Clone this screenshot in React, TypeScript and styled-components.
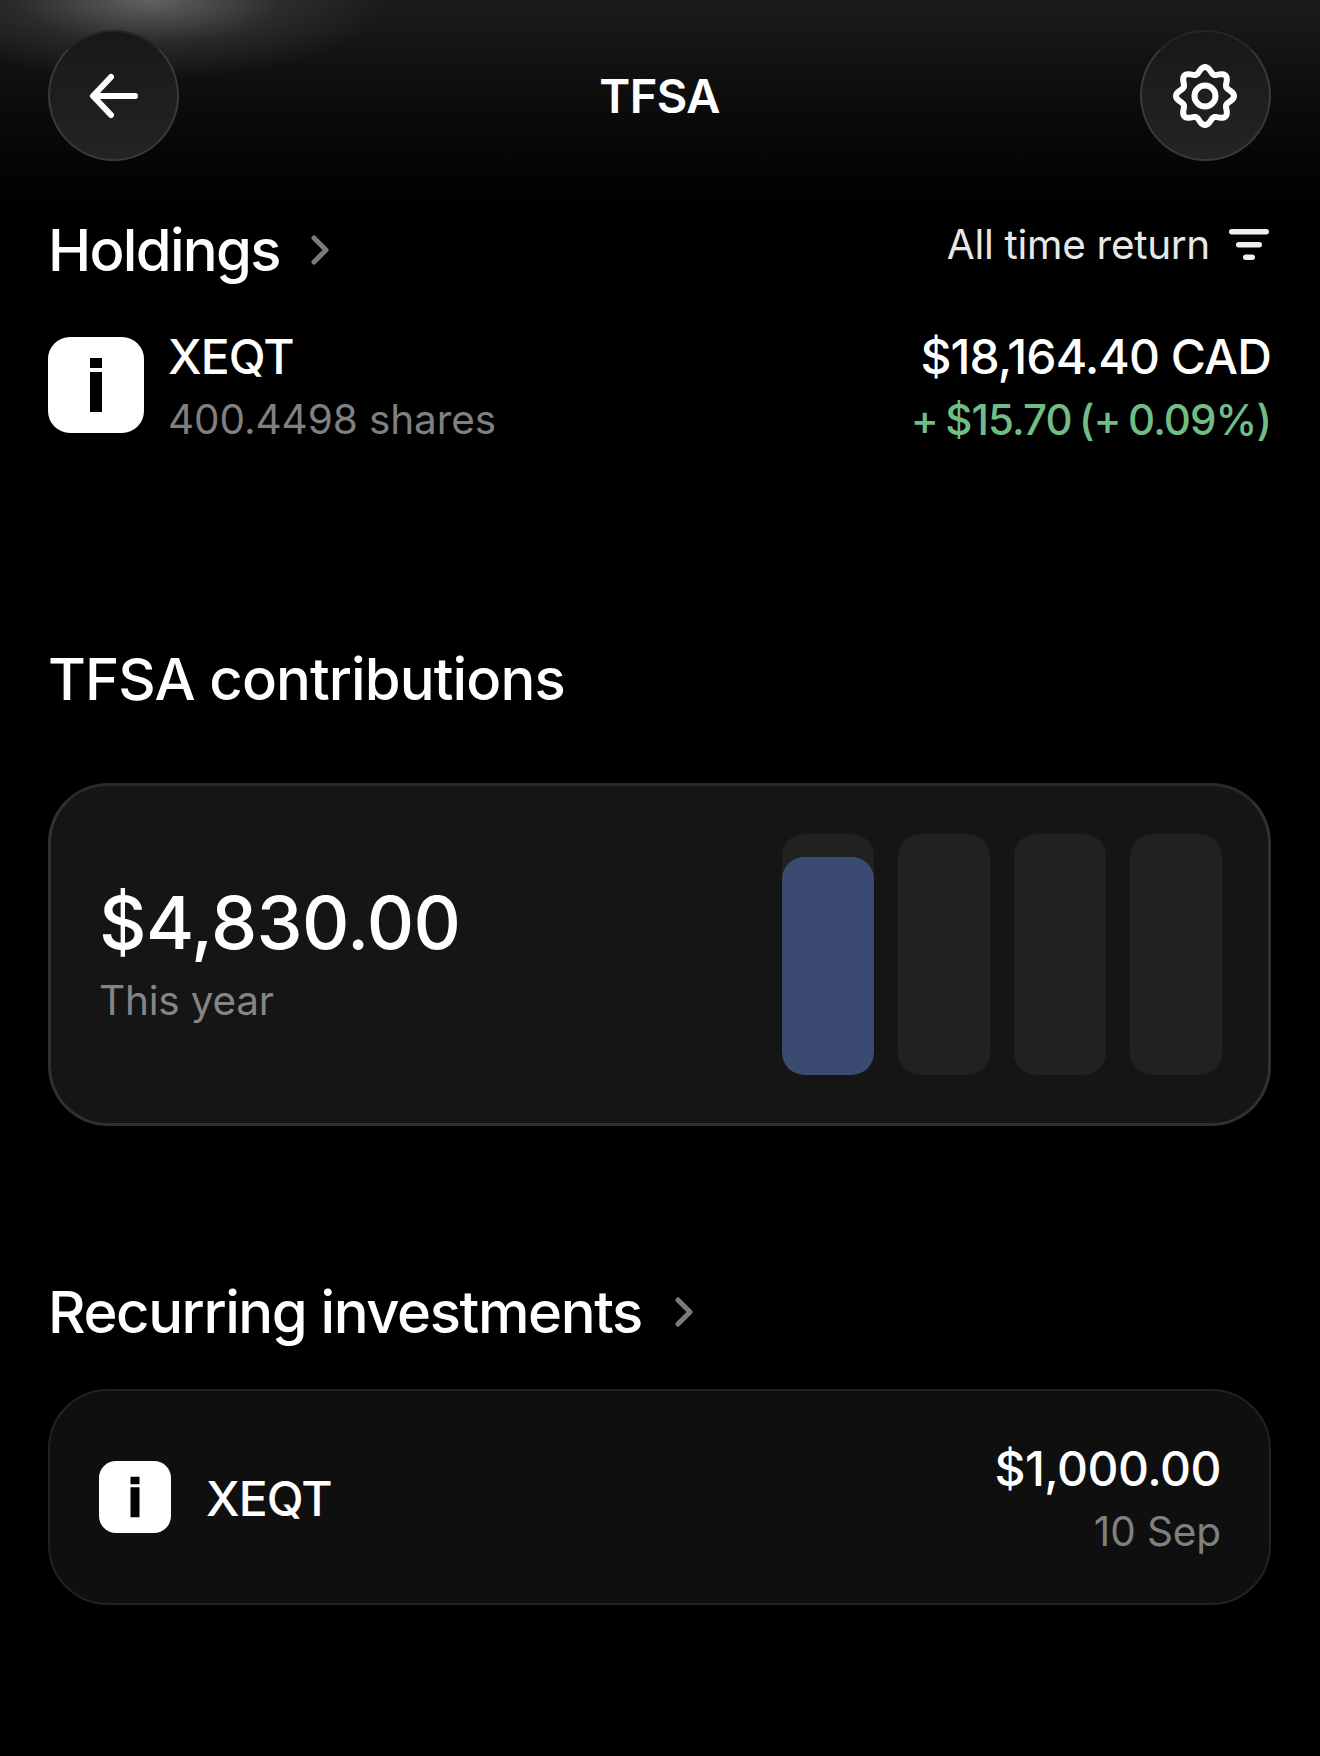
import React from 'react';
import styled, { createGlobalStyle } from 'styled-components';

const GlobalStyle = createGlobalStyle`
  html, body {
    margin: 0;
    padding: 0;
    background: #000;
  }
  body {
    font-family: Inter, "Liberation Sans", sans-serif;
    color: #fff;
    -webkit-font-smoothing: antialiased;
  }
  * {
    box-sizing: border-box;
  }
`;

const Screen = styled.div`
  width: 1320px;
  height: 1756px;
  overflow: hidden;
  padding: 30px 49px 0 48px;
  background:
    radial-gradient(ellipse 240px 80px at 150px 0, rgba(115, 115, 115, 0.8) 0%, rgba(70, 70, 70, 0.4) 55%, rgba(0, 0, 0, 0) 100%),
    linear-gradient(180deg, #1b1b1b 0, #0b0b0b 110px, #000 210px);
`;

const Header = styled.header`
  display: flex;
  align-items: center;
  justify-content: space-between;
  height: 131px;
`;

const RoundButton = styled.button`
  width: 131px;
  height: 131px;
  padding: 0;
  display: flex;
  align-items: center;
  justify-content: center;
  border-radius: 50%;
  border: 2px solid #3a3a3a;
  border-top-color: #262626;
  background: linear-gradient(180deg, #181818 0%, #242424 100%);
`;

const HeaderTitle = styled.h1`
  margin: 0;
  font-size: 47px;
  line-height: 56px;
  font-weight: 600;
  letter-spacing: -0.6px;
`;

const SectionRow = styled.div<{ $top: number }>`
  display: flex;
  align-items: center;
  justify-content: space-between;
  margin-top: ${({ $top }) => $top}px;
`;

const TitleGroup = styled.div<{ $gap: number }>`
  display: flex;
  align-items: center;
  gap: ${({ $gap }) => $gap}px;
`;

const SectionTitle = styled.h2<{ $spacing: number }>`
  margin: 0;
  font-size: 58px;
  line-height: 70px;
  font-weight: 500;
  letter-spacing: ${({ $spacing }) => $spacing}px;
`;

const SortControl = styled.div`
  display: flex;
  align-items: center;
  gap: 19px;
  margin-top: -10px;
  padding-right: 2px;
  font-size: 40.5px;
  line-height: 50px;
  font-weight: 400;
  color: #e8e8e8;
  letter-spacing: -0.3px;
`;

const HoldingRow = styled.div`
  display: flex;
  align-items: center;
  justify-content: space-between;
  margin-top: 41px;
`;

const HoldingInfo = styled.div<{ $gap: number }>`
  display: flex;
  align-items: center;
  gap: ${({ $gap }) => $gap}px;
`;

const Stack = styled.div<{ $end?: boolean }>`
  display: flex;
  flex-direction: column;
  gap: 12px;
  margin-top: 4px;
  align-items: ${({ $end }) => ($end ? 'flex-end' : 'flex-start')};
`;

const PrimaryText = styled.div`
  font-size: 48px;
  line-height: 54px;
  font-weight: 450;
  letter-spacing: -0.9px;
  color: #fff;
`;

const RecurringName = styled(PrimaryText)`
  margin-top: 4px;
`;

const RecurringAmount = styled(PrimaryText)`
  letter-spacing: -0.5px;
`;

const MutedText = styled.div`
  font-size: 40.5px;
  line-height: 48px;
  font-weight: 400;
  color: #808080;
  letter-spacing: -0.1px;
`;

const GainText = styled.div`
  font-size: 42px;
  line-height: 48px;
  font-weight: 500;
  color: #70bd85;
  letter-spacing: -0.9px;
  word-spacing: -3px;
`;

const ContributionCard = styled.section`
  display: flex;
  align-items: center;
  justify-content: space-between;
  height: 343px;
  margin-top: 69px;
  padding: 0 46px 0 48px;
  border-radius: 60px;
  border: 3px solid #303030;
  border-top-color: #2a2a2a;
  background: #151515;
`;

const ContributionText = styled.div`
  display: flex;
  flex-direction: column;
  gap: 10px;
  margin-top: -6px;
`;

const BigAmount = styled.div`
  font-size: 73.5px;
  line-height: 88px;
  font-weight: 500;
  letter-spacing: -0.6px;
`;

const CardLabel = styled.div`
  font-size: 40.5px;
  line-height: 48px;
  color: #858585;
  letter-spacing: -0.2px;
`;

const Quarters = styled.div`
  display: flex;
  gap: 24px;
`;

const Quarter = styled.div`
  position: relative;
  width: 92px;
  height: 241px;
  border-radius: 22px;
  overflow: hidden;
  background: #212121;
`;

const QuarterFill = styled.div`
  position: absolute;
  left: 0;
  right: 0;
  bottom: 0;
  border-radius: 22px;
  background: #3a4a70;
`;

const RecurringCard = styled.section`
  display: flex;
  align-items: center;
  justify-content: space-between;
  height: 216px;
  margin-top: 42px;
  padding: 0 48px 0 49px;
  border-radius: 60px;
  border: 2px solid #222;
  background: #0f0f0f;
`;

const LogoBox = styled.div<{ $size: number; $radius: number }>`
  flex: none;
  display: flex;
  align-items: center;
  justify-content: center;
  width: ${({ $size }) => $size}px;
  height: ${({ $size }) => $size}px;
  border-radius: ${({ $radius }) => $radius}px;
  background: #fff;
`;

const Logo = ({ size, radius }: { size: number; radius: number }) => (
  <LogoBox $size={size} $radius={radius}>
    <svg width={size} height={size} viewBox="0 0 96 96" aria-hidden="true">
      <rect x="42" y="21" width="12" height="10" fill="#000" />
      <rect x="42" y="35" width="12" height="40" fill="#000" />
    </svg>
  </LogoBox>
);

const BackIcon = () => (
  <svg width="50" height="46" viewBox="0 0 50 46" fill="none" stroke="#fff" strokeWidth="6" strokeLinecap="round" strokeLinejoin="round" aria-hidden="true">
    <path d="M46 23H5" />
    <path d="M22 4 4 23l18 19" />
  </svg>
);

// wavy eight lobed outline of the settings badge
const gearPath = () => {
  const points: string[] = [];
  for (let i = 0; i < 160; i += 1) {
    const a = (i / 160) * Math.PI * 2;
    const r = 26 + 3 * Math.cos(8 * a);
    points.push(`${(32 + r * Math.cos(a)).toFixed(2)} ${(32 + r * Math.sin(a)).toFixed(2)}`);
  }
  return `M${points.join('L')}Z`;
};

const GearIcon = () => (
  <svg width="64" height="64" viewBox="0 0 64 64" fill="none" stroke="#fff" strokeWidth="6" strokeLinejoin="round" aria-hidden="true">
    <path d={gearPath()} />
    <circle cx="32" cy="32" r="10.5" />
  </svg>
);

const ChevronIcon = () => (
  <svg width="20" height="30" viewBox="0 0 20 30" fill="none" stroke="#7a7a7a" strokeWidth="5" strokeLinecap="round" strokeLinejoin="round" aria-hidden="true">
    <path d="M4 3 16 15 4 27" />
  </svg>
);

const FilterIcon = () => (
  <svg width="40" height="32" viewBox="0 0 40 32" fill="#f0f0f0" aria-hidden="true">
    <rect x="0" y="0" width="40" height="5.5" rx="2.7" />
    <rect x="7" y="13" width="26" height="5.5" rx="2.7" />
    <rect x="14" y="25.5" width="12" height="5.5" rx="2.7" />
  </svg>
);

const quarterFills = [218, 0, 0, 0];

const App = () => (
  <>
    <GlobalStyle />
    <Screen>
      <Header>
        <RoundButton aria-label="Back">
          <BackIcon />
        </RoundButton>
        <HeaderTitle>TFSA</HeaderTitle>
        <RoundButton aria-label="Settings">
          <GearIcon />
        </RoundButton>
      </Header>

      <SectionRow $top={54}>
        <TitleGroup $gap={30}>
          <SectionTitle $spacing={-1.7}>Holdings</SectionTitle>
          <ChevronIcon />
        </TitleGroup>
        <SortControl>
          All time return
          <FilterIcon />
        </SortControl>
      </SectionRow>

      <HoldingRow>
        <HoldingInfo $gap={24}>
          <Logo size={96} radius={22} />
          <Stack>
            <PrimaryText>XEQT</PrimaryText>
            <MutedText>400.4498 shares</MutedText>
          </Stack>
        </HoldingInfo>
        <Stack $end>
          <PrimaryText>$18,164.40 CAD</PrimaryText>
          <GainText>+ $15.70 (+ 0.09%)</GainText>
        </Stack>
      </HoldingRow>

      <SectionRow $top={200}>
        <SectionTitle $spacing={-0.9}>TFSA contributions</SectionTitle>
      </SectionRow>

      <ContributionCard>
        <ContributionText>
          <BigAmount>$4,830.00</BigAmount>
          <CardLabel>This year</CardLabel>
        </ContributionText>
        <Quarters>
          {quarterFills.map((fill, i) => (
            <Quarter key={i}>
              {fill > 0 && <QuarterFill style={{ height: fill }} />}
            </Quarter>
          ))}
        </Quarters>
      </ContributionCard>

      <SectionRow $top={151}>
        <TitleGroup $gap={32}>
          <SectionTitle $spacing={-1.4}>Recurring investments</SectionTitle>
          <ChevronIcon />
        </TitleGroup>
      </SectionRow>

      <RecurringCard>
        <HoldingInfo $gap={35}>
          <Logo size={72} radius={17} />
          <RecurringName>XEQT</RecurringName>
        </HoldingInfo>
        <Stack $end>
          <RecurringAmount>$1,000.00</RecurringAmount>
          <MutedText>10 Sep</MutedText>
        </Stack>
      </RecurringCard>
    </Screen>
  </>
);

export default App;
